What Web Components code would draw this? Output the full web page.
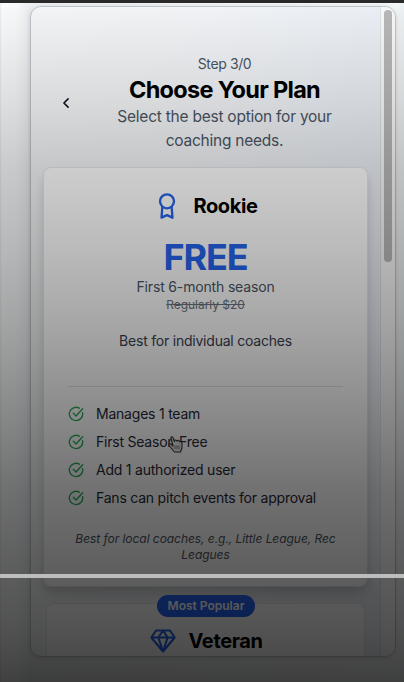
<!DOCTYPE html>
<html lang="en"><head><meta charset="utf-8"><title>Choose Your Plan</title>
<style>html,body{margin:0;height:100%;overflow:hidden}body{font-family:Inter,"Liberation Sans",sans-serif}</style></head>
<body><plan-screen></plan-screen>
<script>
const define=(name,html)=>customElements.define(name,class extends HTMLElement{
  constructor(){super();this.attachShadow({mode:'open'}).innerHTML=html;}
});
define('check-item',`<style>:host{display:flex;align-items:center;gap:12px;height:28px;font-size:14px;line-height:20px;letter-spacing:-.22px;color:#1f2937;white-space:nowrap}svg{flex:none;width:16px;height:16px;color:#2cab5c}</style>
<svg viewBox="0 0 24 24" fill="none" stroke="currentColor" stroke-width="2.1" stroke-linecap="round" stroke-linejoin="round"><path d="M21.8 10A10 10 0 1 1 17 3.335"/><path d="m8 11 4 4L22 4"/></svg><span><slot></slot></span>`);
define('plan-title',`<style>:host{display:flex;align-items:center;justify-content:center;gap:12px;height:28px;color:#000;font-weight:650;font-size:20px;line-height:28px;letter-spacing:-.38px}::slotted(svg){width:28px;height:28px;color:#2563eb}</style><slot name="icon"></slot><span><slot></slot></span>`);
define('plan-badge',`<style>:host{display:block;box-sizing:border-box;width:98px;height:22px;border-radius:11px;background:#2463f5;color:#fff;font-size:12px;line-height:22px;font-weight:600;text-align:center;white-space:nowrap}</style><slot></slot>`);
define('plan-card',`<style>:host{display:block;box-sizing:border-box;background:#fff;border:1px solid #e5e7eb;border-radius:8px;position:relative}
:host([kind=main]){margin:0 13px 0 12px;height:420px;padding:24px 24px 0;box-shadow:0 10px 15px -3px #0002,0 4px 8px #0001}
:host([kind=next]){margin:16px 16px 0 15px;height:160px;padding:23px 20px}
::slotted(plan-badge){position:absolute;top:-9px;left:110px}</style><slot></slot>`);
define('rookie-details',`<style>:host{display:block;text-align:center}
.price{margin-top:17px;font-size:36px;line-height:40px;font-weight:750;color:#2563eb;letter-spacing:-1.1px}
.term{font-size:14px;line-height:20px;color:#4b5563;margin-top:0;letter-spacing:-.16px}.old{font-size:12px;line-height:16px;color:#6b7280;text-decoration:line-through;letter-spacing:-.05px}
.best{margin-top:18px;font-size:14px;line-height:20px;color:#374151;letter-spacing:-.22px}.rule{height:1px;background:#e1e3e6;margin:35px 0 13px}
.note{font-size:12px;line-height:16px;font-style:italic;color:#4b5563;margin:19px 0 0;letter-spacing:-.05px}
</style><div class="price">FREE</div><div class="term">First 6-month season</div><div class="old">Regularly $20</div><div class="best">Best for individual coaches</div><div class="rule"></div>
<check-item>Manages 1 team</check-item><check-item>First Season Free</check-item><check-item>Add 1 authorized user</check-item><check-item>Fans can pitch events for approval</check-item>
<div class="note">Best for local coaches, e.g., Little League, Rec<br>Leagues</div>`);
define('plan-header',`<style>:host{display:flex;height:160px;box-sizing:border-box;padding:47px 25px 0 25px}
.back{width:20px;display:flex;align-items:flex-start;padding-top:39px}.back svg{width:20px;height:20px;color:#111827}
.copy{flex:1;text-align:center;padding-left:12px;margin-right:-5px}.step{font-size:14px;line-height:20px;color:#4b5563;letter-spacing:-.4px}
h1{margin:0;font-size:23.5px;line-height:32px;font-weight:700;letter-spacing:-.7px;color:#000}p{margin:-1px 0 0;font-size:15.5px;line-height:24px;color:#4b5563;white-space:nowrap;letter-spacing:-.24px}</style>
<div class="back"><svg viewBox="0 0 24 24" fill="none" stroke="currentColor" stroke-width="2" stroke-linecap="round" stroke-linejoin="round"><path d="m14.5 17-5-5 5-5"/></svg></div>
<div class="copy"><div class="step">Step 3/0</div><h1>Choose Your Plan</h1><p>Select the best option for your<br>coaching needs.</p></div>`);
define('scroll-track',`<style>:host{display:block;width:15px;box-sizing:border-box;background:#fafafa;border-left:1px solid #dfe2e5;padding:3px 3px 0 3px}i{display:block;width:8px;height:252px;border-radius:4px;background:#b9b9b9}</style><i></i>`);
define('plan-screen',`<style>:host{display:block;position:relative;width:404px;height:682px;overflow:hidden;background:linear-gradient(90deg,#e9ebed 0,#fbfcfd 2px,#f8fafb 16px,#eceef1 30px,#f4f6f7 396px,#edf2f4 404px)}
.top{height:3px;background:#292929;position:relative;z-index:3}
.window{box-sizing:border-box;display:flex;margin:3px 8px 0 30px;width:366px;height:651px;border:1px solid #bfc5c9;border-radius:11px;overflow:hidden;background:linear-gradient(90deg,#f5f7f8,#f3f5f8 50%,#ecf1f7);box-shadow:0 1px 4px #0002}
main{flex:1;min-width:0;margin-right:-1px}
.shade{position:absolute;inset:3px 0 0;z-index:2;background:linear-gradient(#0000 0,#00000005 10px,#0000001d 98px,#00000032 165px,#00000045 247px,#0000005a 325px,#00000073 405px,#0000008d 485px,#0000009e 555px,#000000ab 622px,#000000b4 652px,#000000be 679px);pointer-events:none}
.progress{position:absolute;z-index:3;left:0;right:0;top:574px;height:4px;background:#bdbdbd}
.cursor{position:absolute;z-index:1;left:167px;top:434px;width:18px;height:20px}</style>
<div class="top"></div><div class="window"><main><plan-header></plan-header>
<plan-card kind="main"><plan-title><svg slot="icon" viewBox="0 0 24 24" fill="none" stroke="currentColor" stroke-width="2" stroke-linecap="round" stroke-linejoin="round"><circle cx="12" cy="8" r="6"/><path d="M8 13 7.300 22 12 19.800 16.700 22 16 13"/></svg>Rookie</plan-title><rookie-details></rookie-details></plan-card>
<plan-card kind="next"><plan-badge>Most Popular</plan-badge><plan-title><svg slot="icon" viewBox="0 0 24 24" fill="none" stroke="currentColor" stroke-width="1.8" stroke-linejoin="round"><path d="M6 3h12l4 6-10 12L2 9zM2 9h20M12 3 8 9l4 12 4-12-4-6"/></svg>Veteran</plan-title></plan-card>
</main><scroll-track></scroll-track></div>
<svg class="cursor" viewBox="0 0 18 20" fill="#e8e8e8" stroke="#333" stroke-width="1.1" stroke-linejoin="round"><path d="m6 12-2-7.500C3.500 2.500 5.500 2 6.200 4L7.500 7.500C7.500 5.500 9.500 5.500 10 7.200 10.500 5.800 12.200 6 12.500 7.800c1-1 2.300-.3 2.400 1.200l.1 4.500-1.500 4.500H7.500L2.500 12c-1.300-1.700.6-2.700 1.800-1.600z"/><path d="M8 11.500v3.500m2-3.500v3.500m2-3.500v3.500" stroke-width=".6"/></svg>
<div class="shade"></div><div class="progress"></div>`);
</script></body></html>
